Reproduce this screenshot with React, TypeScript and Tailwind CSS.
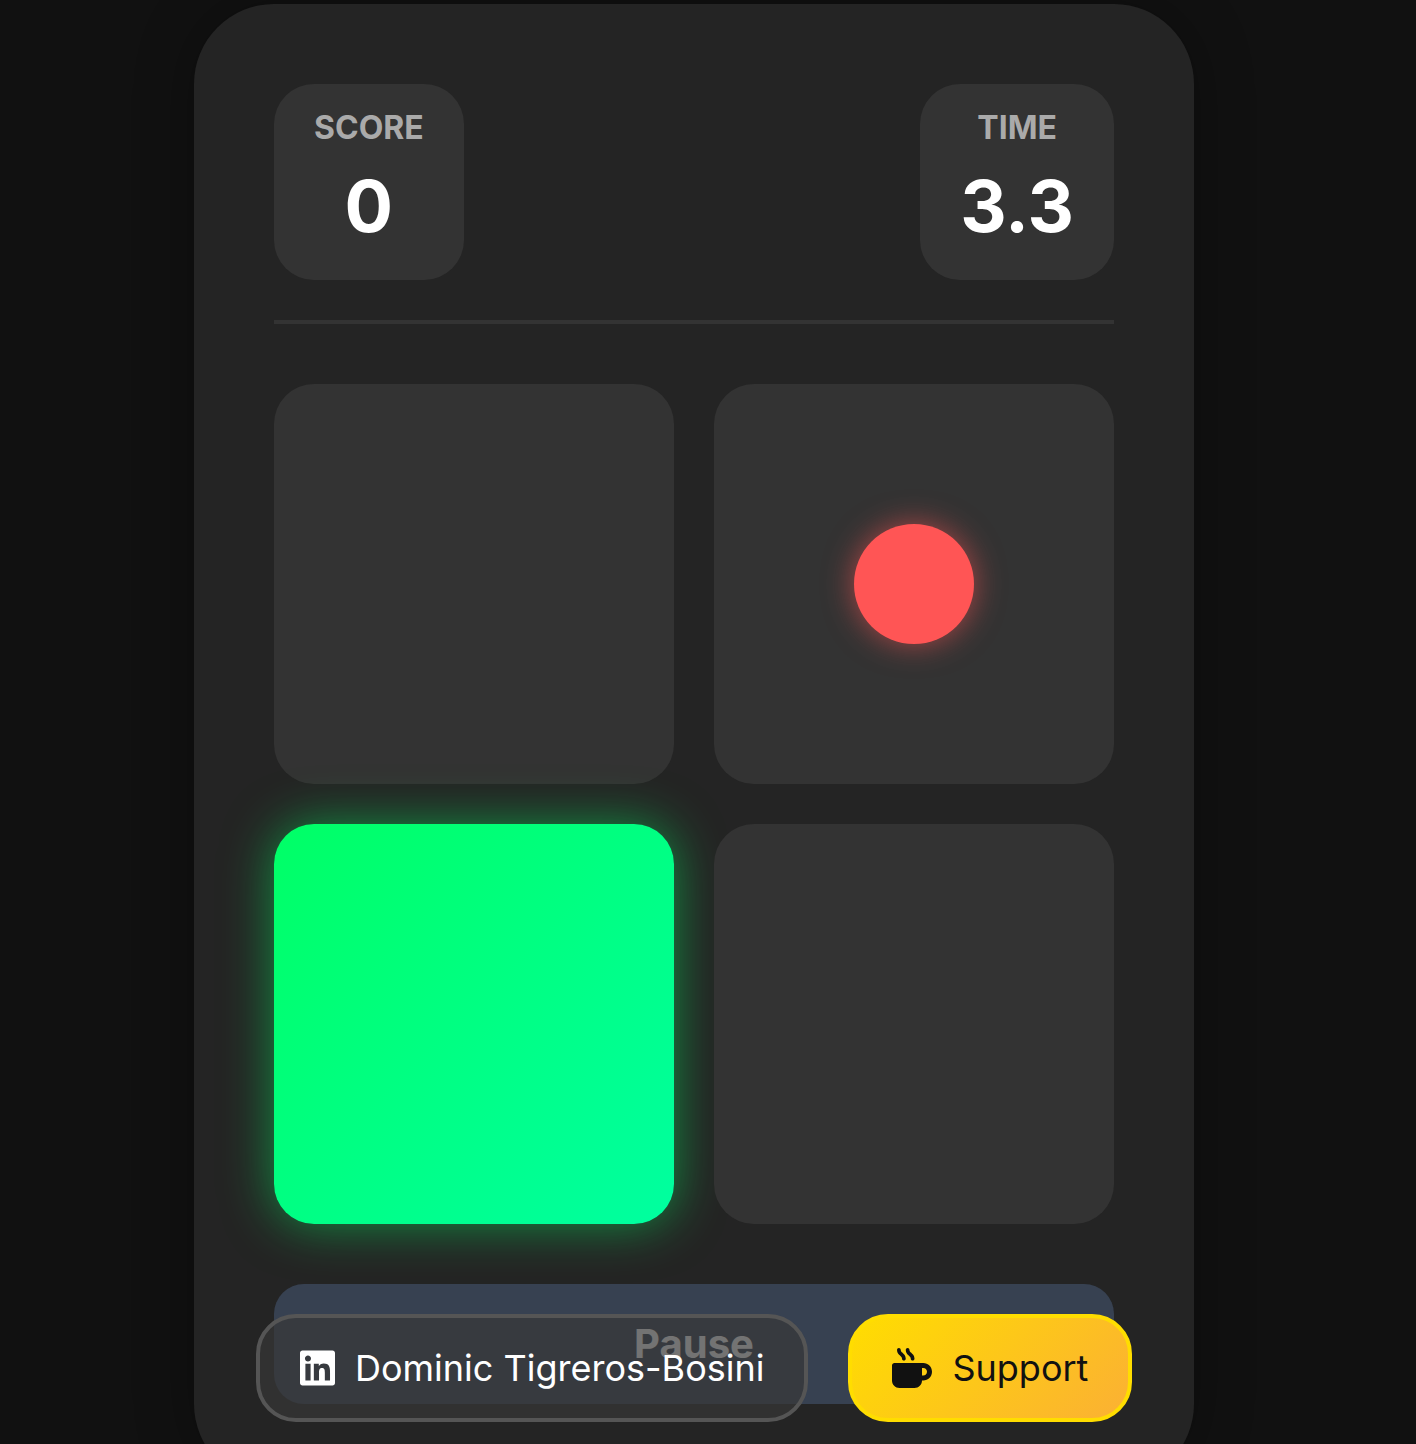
import { FaLinkedin, FaMugHot } from "react-icons/fa6";

const Stat = ({ label, value }: { label: string; value: string }) => (
  <div className="flex flex-col items-center rounded-[40px] bg-[#333333] px-10 pt-[20px] pb-[28px]">
    <div className="text-[32px] leading-[48px] font-bold text-[#aaaaaa]">{label}</div>
    <div className="mt-[8px] text-[72px] leading-[92px] font-bold text-white">{value}</div>
  </div>
);

export default function App() {
  return (
    <div className="relative h-screen overflow-hidden bg-[#111111] font-['Inter',sans-serif]">
      <div className="mr-[28px] flex justify-center pt-1">
        <div className="w-[1000px] rounded-[80px] bg-[#242424] p-20 shadow-[0_0_60px_rgba(0,0,0,0.3)]">
          <div className="flex items-start justify-between">
            <Stat label="SCORE" value="0" />
            <Stat label="TIME" value="3.3" />
          </div>
          <div className="mt-10 h-1 bg-[#333333]" />
          <div className="mt-[60px] grid grid-cols-2 gap-10">
            <div className="h-[400px] rounded-[40px] bg-[#333333]" />
            <div className="flex h-[400px] items-center justify-center rounded-[40px] bg-[#333333]">
              <div className="h-[120px] w-[120px] rounded-full bg-[#ff5555] shadow-[0_0_30px_rgba(255,85,85,0.6)]" />
            </div>
            <div className="h-[400px] rounded-[40px] bg-[linear-gradient(135deg,#00ff66,#00ffa0)] shadow-[0_0_50px_rgba(0,255,102,0.5)]" />
            <div className="h-[400px] rounded-[40px] bg-[#333333]" />
          </div>
          <div className="mt-[60px] flex h-[120px] items-center justify-center rounded-[30px] bg-[#374151]">
            <span className="text-[40px] font-bold text-white">Pause</span>
          </div>
        </div>
      </div>

      <div className="absolute top-[1314px] left-[256px] flex gap-10">
        <div className="flex h-[108px] items-center gap-5 rounded-[40px] border-4 border-[#555555] bg-[#383838]/70 px-10 text-[36px] text-white">
          <FaLinkedin className="h-10 w-[35px]" />
          Dominic Tigreros-Bosini
        </div>
        <div className="flex h-[108px] items-center gap-5 rounded-[40px] border-4 border-[#ffdd00] bg-[linear-gradient(135deg,#ffdd00,#fbb034)] px-10 text-[36px] text-[#111111]">
          <FaMugHot className="h-10 w-10" />
          Support
        </div>
      </div>
    </div>
  );
}
